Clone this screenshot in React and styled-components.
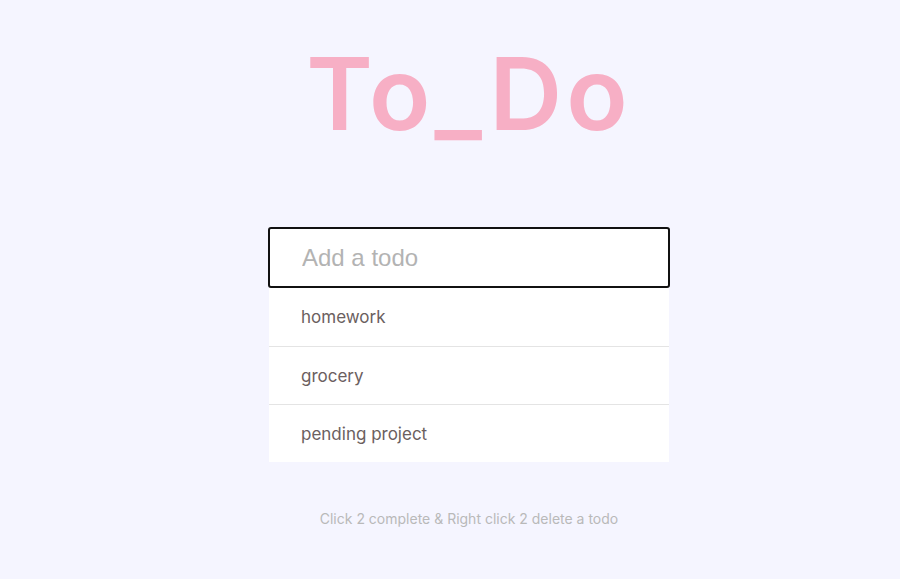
import styled, { createGlobalStyle } from 'styled-components';

const GlobalStyle = createGlobalStyle`
  html, body {
    margin: 0;
    padding: 0;
    background: #f5f5ff;
  }
  body {
    font-family: "Inter", "Noto Sans", sans-serif;
  }
`;

const Page = styled.div`
  min-height: 579px;
  display: flex;
  flex-direction: column;
  align-items: center;
  padding-left: 38px;
  box-sizing: border-box;
`;

const Title = styled.h1`
  margin: 30px 0 0;
  font-family: "Inter", "Noto Sans", sans-serif;
  font-size: 101px;
  font-weight: 600;
  letter-spacing: 4px;
  line-height: 126px;
  color: #f7afc5;
`;

const Card = styled.div`
  margin-top: 71px;
  width: 400px;
  display: flex;
  flex-direction: column;
  background: #fff;
`;

const Input = styled.input`
  box-sizing: border-box;
  width: 402px;
  height: 61px;
  margin-left: -1px;
  padding: 0 0 0 32px;
  border: 2px solid #111;
  border-radius: 3px;
  outline: none;
  font-family: "Liberation Sans", Arial, sans-serif;
  font-size: 24px;
  color: #333;
  caret-color: #111;
  background: #fff;

  &::placeholder {
    color: #b3b3b3;
  }
`;

const Item = styled.div`
  box-sizing: border-box;
  height: 58px;
  display: flex;
  align-items: center;
  padding-left: 32px;
  font-size: 17px;
  color: #6b6060;
  border-top: ${(p) => (p.first ? 'none' : '1px solid #e4e4e4')};
  cursor: pointer;
`;

const Hint = styled.p`
  margin: 48px 0 0;
  font-size: 14px;
  color: #b9b9b9;
`;

const todos = ['homework', 'grocery', 'pending project'];

export default function App() {
  return (
    <>
      <GlobalStyle />
      <Page>
        <Title>To_Do</Title>
        <Card>
          <Input placeholder="Add a todo" autoFocus />
          {todos.map((t, i) => (
            <Item key={t} first={i === 0}>
              {t}
            </Item>
          ))}
        </Card>
        <Hint>Click 2 complete &amp; Right click 2 delete a todo</Hint>
      </Page>
    </>
  );
}
